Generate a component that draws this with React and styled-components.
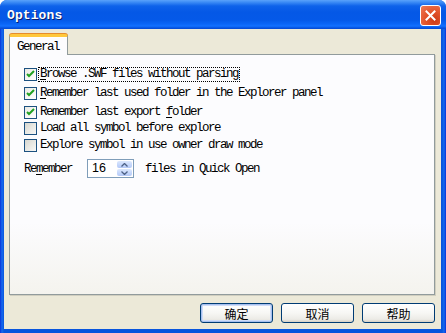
import React from "react";
import styled, { createGlobalStyle } from "styled-components";

const GlobalStyle = createGlobalStyle`
  html, body {
    margin: 0;
    padding: 0;
    background: #ffffff;
  }
`;

const mono = `"Liberation Mono", "DejaVu Sans Mono", monospace`;

const Window = styled.div`
  width: 446px;
  height: 333px;
  display: flex;
  flex-direction: column;
  background: linear-gradient(90deg, #0831d9 0, #166aee 2px, #0855dd 4px, #0855dd 442px, #166aee 444px, #0831d9 446px);
  border-radius: 7px 7px 0 0;
  overflow: hidden;
`;

const TitleBar = styled.div`
  height: 29px;
  flex: none;
  display: flex;
  align-items: center;
  justify-content: space-between;
  padding: 0 5px 0 7px;
  box-sizing: border-box;
  background: linear-gradient(
    180deg,
    #5aa2fb 0,
    #3f8ef6 2px,
    #0e62ea 6px,
    #0558e6 12px,
    #0559e8 20px,
    #0b66f7 24px,
    #1371ff 26px,
    #0552e0 28px,
    #0849d0 29px
  );
`;

const Title = styled.span`
  font-family: ${mono};
  font-weight: bold;
  font-size: 13px;
  color: #ffffff;
  text-shadow: 1px 1px 0 #0a1e6e;
  letter-spacing: 0.1px;
  margin-top: 2px;
`;

const CloseButton = styled.div`
  width: 21px;
  height: 21px;
  box-sizing: border-box;
  border: 1px solid #ffffff;
  border-radius: 3px;
  background: radial-gradient(circle at 70% 75%, #cc3a16 0, #e2532a 45%, #ee7a56 100%);
  display: flex;
  align-items: center;
  justify-content: center;
  margin-top: 1px;
`;

const Client = styled.div`
  flex: 1;
  margin: 0 5px 4px 4px;
  background: #ece9d8;
  display: flex;
  flex-direction: column;
  padding: 5px 6px 6px 5px;
  box-sizing: border-box;
`;

const TabStrip = styled.div`
  display: flex;
  height: 20px;
  flex: none;
`;

const Tab = styled.div`
  position: relative;
  z-index: 1;
  height: 21px;
  margin-bottom: -1px;
  box-sizing: border-box;
  padding: 4px 8px 0 7px;
  background: #fcfcfe;
  border: 1px solid #919b9c;
  border-top: 3px solid #ffc83c;
  border-bottom: none;
  border-radius: 3px 3px 0 0;
  box-shadow: inset 0 1px 0 #ffffff, 0 -1px 0 #e68b2c;
  font-family: ${mono};
  font-size: 12.5px;
  letter-spacing: -1.5px;
  line-height: 13px;
  color: #000;
`;

const Panel = styled.div`
  flex: 1;
  border: 1px solid #919b9c;
  box-shadow: 1px 1px 0 #d0cebf;
  background: linear-gradient(180deg, #fcfcfe 0%, #fcfcfe 70%, #f4f3ee 100%);
  padding: 13px 14px 0 14px;
  display: flex;
  flex-direction: column;
`;

const CheckRow = styled.div`
  display: flex;
  align-items: center;
  height: 13px;
  margin-top: ${(p) => p.$space}px;
`;

const Box = styled.div`
  width: 13px;
  height: 13px;
  flex: none;
  box-sizing: border-box;
  border: 1px solid #1c5180;
  background: ${(p) =>
    p.$checked
      ? "linear-gradient(135deg, #e8e8e2 0%, #f6f6f3 50%, #ffffff 100%)"
      : "linear-gradient(135deg, #d6d6cf 0%, #e8e8e3 50%, #f8f8f6 100%)"};
  display: flex;
  align-items: center;
  justify-content: center;
`;

const Label = styled.span`
  margin-left: 1px;
  padding: 0 1px;
  border: 1px dotted ${(p) => (p.$focus ? "#000" : "transparent")};
  font-family: ${mono};
  font-size: 12.5px;
  letter-spacing: -1.5px;
  line-height: 13px;
  color: #000;
  white-space: nowrap;
`;

const Key = styled.span`
  text-decoration: underline;
  text-underline-offset: 2px;
`;

const SpinRow = styled.div`
  display: flex;
  align-items: center;
  margin-top: 7px;
  height: 19px;
`;

const Text = styled.span`
  font-family: ${mono};
  font-size: 12.5px;
  letter-spacing: -1.5px;
  color: #000;
  white-space: nowrap;
  width: ${(p) => (p.$w ? `${p.$w}px` : "auto")};
`;

const SpinBox = styled.div`
  width: 47px;
  height: 19px;
  box-sizing: border-box;
  border: 1px solid #7f9db9;
  background: #fff;
  display: flex;
  align-items: stretch;
  margin-right: 11px;
`;

const SpinValue = styled.span`
  flex: 1;
  padding-left: 4px;
  font-family: "Liberation Sans", Arial, sans-serif;
  font-size: 12.5px;
  line-height: 17px;
  color: #000;
`;

const SpinButtons = styled.div`
  width: 15px;
  margin: 1px;
  display: flex;
  flex-direction: column;
  gap: 1px;
`;

const SpinArrow = styled.div`
  flex: 1;
  border-radius: 2px;
  background: linear-gradient(180deg, #dce8fd 0%, #c3d5fb 60%, #b3c8f5 100%);
  display: flex;
  align-items: center;
  justify-content: center;
`;

const Footer = styled.div`
  display: flex;
  justify-content: flex-end;
  gap: 8px;
  margin-top: 8px;
  flex: none;
`;

const Button = styled.div`
  width: 73px;
  height: 20px;
  box-sizing: border-box;
  border: 1px solid #003c74;
  border-radius: 3px;
  background: linear-gradient(180deg, #ffffff 0%, #f7f7f4 50%, #ecebe6 85%, #d6d0c5 100%);
  box-shadow: ${(p) =>
    p.$default ? "inset 0 0 0 1px #a7c0ef, inset 0 0 0 2px #cfdcf7" : "none"};
  display: flex;
  align-items: center;
  justify-content: center;
  font-family: "Noto Sans CJK SC", sans-serif;
  font-size: 12px;
  color: #000;
`;

const Check = () => (
  <svg width="9" height="9" viewBox="0 0 9 9">
    <path d="M1 4 L3 6 L8 1" fill="none" stroke="#21a121" strokeWidth="2" />
  </svg>
);

const Close = () => (
  <svg width="11" height="11" viewBox="0 0 11 11">
    <path d="M1.5 1.5 L9.5 9.5 M9.5 1.5 L1.5 9.5" stroke="#ffffff" strokeWidth="2" strokeLinecap="square" />
  </svg>
);

const Chevron = ({ up }) => (
  <svg width="7" height="4" viewBox="0 0 7 4">
    <path
      d={up ? "M0.5 3.5 L3.5 0.5 L6.5 3.5" : "M0.5 0.5 L3.5 3.5 L6.5 0.5"}
      fill="none"
      stroke="#4d6185"
      strokeWidth="1.3"
    />
  </svg>
);

const options = [
  { key: "browse", space: 0, checked: true, focus: true, label: [<Key key="k">B</Key>, "rowse .SWF files without parsing"] },
  { key: "folder", space: 6, checked: true, label: [<Key key="k">R</Key>, "emember last used folder in the Explorer panel"] },
  { key: "export", space: 6, checked: true, label: ["Remember last export ", <Key key="k">f</Key>, "older"] },
  { key: "load", space: 3, checked: false, label: ["Load all symbol before explore"] },
  { key: "owner", space: 4, checked: false, label: ["Explore symbol in use owner draw mode"] }
];

const App = () => (
  <Window>
    <GlobalStyle />
    <TitleBar>
      <Title>Options</Title>
      <CloseButton>
        <Close />
      </CloseButton>
    </TitleBar>
    <Client>
      <TabStrip>
        <Tab>General</Tab>
      </TabStrip>
      <Panel>
        {options.map((o) => (
          <CheckRow key={o.key} $space={o.space}>
            <Box $checked={o.checked}>{o.checked && <Check />}</Box>
            <Label $focus={o.focus}>{o.label}</Label>
          </CheckRow>
        ))}
        <SpinRow>
          <Text $w={63}>
            Re<Key>m</Key>ember
          </Text>
          <SpinBox>
            <SpinValue>16</SpinValue>
            <SpinButtons>
              <SpinArrow>
                <Chevron up />
              </SpinArrow>
              <SpinArrow>
                <Chevron />
              </SpinArrow>
            </SpinButtons>
          </SpinBox>
          <Text>files in Quick Open</Text>
        </SpinRow>
      </Panel>
      <Footer>
        <Button $default>确定</Button>
        <Button>取消</Button>
        <Button>帮助</Button>
      </Footer>
    </Client>
  </Window>
);

export default App;
